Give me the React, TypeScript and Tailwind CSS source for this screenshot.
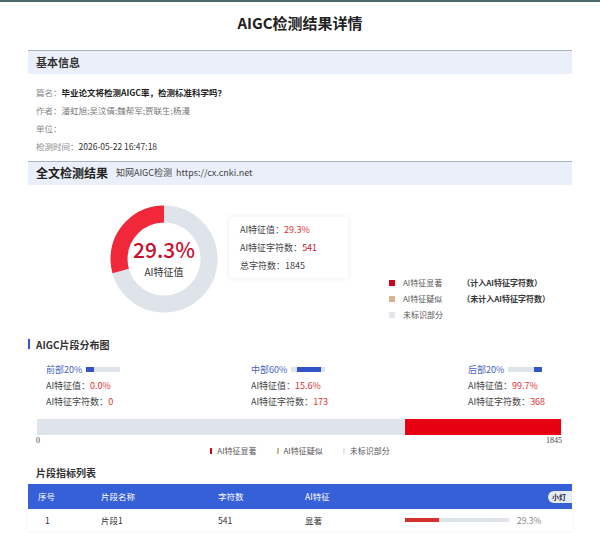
import React from 'react'

const font = { fontFamily: '"Noto Sans CJK SC", "Noto Sans", sans-serif' }

function Donut() {
  const r = 45
  const c = 2 * Math.PI * r
  const red = c * 0.293
  return (
    <div className="relative w-[108px] h-[108px]">
      <svg width="108" height="108" viewBox="0 0 108 108">
        <circle cx="54" cy="54" r={r} fill="none" stroke="#dfe3ea" strokeWidth="17" />
        <circle
          cx="54"
          cy="54"
          r={r}
          fill="none"
          stroke="#f0283a"
          strokeWidth="17"
          strokeDasharray={`${red} ${c}`}
          transform="rotate(-90 54 54) scale(1 -1) translate(0 -108)"
        />
      </svg>
      <div className="absolute inset-0 flex flex-col items-center justify-center">
        <div className="text-[21px] leading-none font-medium text-[#c8102e]">29.3%</div>
        <div className="text-[10px] text-[#333] mt-1">AI特征值</div>
      </div>
    </div>
  )
}

function Segment({ label, fill, offset, value, chars, w }: { label: string; fill: string; offset: string; value: string; chars: string; w: string }) {
  return (
    <div className={`text-[9px] leading-[16px] ${w}`}>
      <div className="flex items-center gap-1 text-[#4a5fc1]">
        {label}
        <div className="relative w-[34px] h-[5px] bg-[#dfe3ea]">
          <div className={`absolute top-0 h-full bg-[#3154c8] ${fill} ${offset}`} />
        </div>
      </div>
      <div className="text-[#444]">AI特征值：<span className="text-[#d33]">{value}</span></div>
      <div className="text-[#444]">AI特征字符数：<span className="text-[#d33]">{chars}</span></div>
    </div>
  )
}

export default function App() {
  return (
    <div className="w-[600px] h-[533px] bg-white overflow-hidden text-[#333] border-t-2 border-[#4a6b6a]" style={font}>
      <div className="pt-[10px] text-center text-[15px] font-bold text-[#222]">AIGC检测结果详情</div>
      <div className="mx-[28px] mt-[15px]">
        <div className="h-[24px] bg-[#eaeff9] border-t border-[#aab4cc] flex items-center px-[8px] text-[11px] font-bold">基本信息</div>
        <div className="pt-[9px] pl-[8px] text-[8.5px] leading-[18px] text-[#888]">
          <div>篇名：<span className="text-[#222] font-bold">毕业论文将检测AIGC率，检测标准科学吗？</span></div>
          <div>作者：<span className="text-[#777]">潘虹旭;吴汶倩;魏帮军;贾联生;杨漫</span></div>
          <div>单位：</div>
          <div>检测时间：<span className="text-[#333]">2026-05-22 16:47:18</span></div>
        </div>
        <div className="mt-[6px] h-[24px] bg-[#eaeff9] border-t border-[#aab4cc] flex items-center gap-2 px-[8px]">
          <span className="text-[12px] font-bold text-[#222]">全文检测结果</span>
          <span className="text-[9px] text-[#444]">知网AIGC检测&nbsp; https://cx.cnki.net</span>
        </div>
        <div className="flex mt-[20px] h-[132px]">
          <div className="ml-[82px]"><Donut /></div>
          <div className="ml-[11px] mt-[12px] w-[119px] h-[61px] shadow-[0_0_6px_rgba(0,0,0,0.08)] pl-[11px] pt-[4px] text-[9px] leading-[18px] text-[#444]">
            <div>AI特征值：<span className="text-[#d33]">29.3%</span></div>
            <div>AI特征字符数：<span className="text-[#c8102e]">541</span></div>
            <div>总字符数：1845</div>
          </div>
          <div className="ml-[41px] mt-[70px] text-[8px] leading-[16px] text-[#555]">
            <div className="flex items-center gap-2"><span className="w-[6px] h-[6px] bg-[#d0021b]" />AI特征显著<span className="ml-3 font-bold text-[#333]">（计入AI特征字符数）</span></div>
            <div className="flex items-center gap-2"><span className="w-[6px] h-[6px] bg-[#d4b58f]" />AI特征疑似<span className="ml-3 font-bold text-[#333]">（未计入AI特征字符数）</span></div>
            <div className="flex items-center gap-2"><span className="w-[6px] h-[6px] bg-[#e3e5ea]" />未标识部分</div>
          </div>
        </div>
        <div className="flex items-center gap-[6px] text-[10px] font-bold">
          <span className="w-[2px] h-[10px] bg-[#3154c8]" />AIGC片段分布图
        </div>
        <div className="flex pl-[18px] mt-[10px]">
          <Segment w="w-[205px]" label="前部20%" fill="w-[8px]" offset="left-0" value="0.0%" chars="0" />
          <Segment w="w-[217px]" label="中部60%" fill="w-[24px]" offset="left-[6px]" value="15.6%" chars="173" />
          <Segment w="w-[100px]" label="后部20%" fill="w-[8px]" offset="right-0" value="99.7%" chars="368" />
        </div>
        <div className="ml-[9px] mr-[11px] mt-[9px] h-[16px] bg-[#dfe3ea] flex justify-end">
          <div className="w-[156px] bg-[#e60012]" />
        </div>
        <div className="ml-[8px] mr-[10px] flex justify-between text-[8px] text-[#444]" style={{ fontFamily: '"Liberation Serif", serif' }}>
          <span>0</span><span>1845</span>
        </div>
        <div className="flex justify-center gap-[20px] text-[8px] text-[#555] -mt-[2px]">
          <span className="flex items-center gap-[5px]"><span className="w-[2px] h-[6px] bg-[#d0021b]" />AI特征显著</span>
          <span className="flex items-center gap-[5px]"><span className="w-[2px] h-[6px] bg-[#d4b58f]" />AI特征疑似</span>
          <span className="flex items-center gap-[5px]"><span className="w-[2px] h-[6px] bg-[#e3e5ea]" />未标识部分</span>
        </div>
        <div className="mt-[8px] ml-[8px] text-[10px] font-bold">片段指标列表</div>
        <div className="mt-[4px] h-[25px] bg-[#3560d8] text-white text-[8.5px] flex items-center relative">
          <span className="w-[73px] pl-[10px]">序号</span>
          <span className="w-[117px]">片段名称</span>
          <span className="w-[87px]">字符数</span>
          <span>AI特征</span>
          <span className="absolute right-0 top-[7px] h-[12px] w-[24px] rounded-l-full bg-[#e6ecf8] text-[#223] text-[7px] font-bold pl-[4px] leading-[12px]">小灯</span>
        </div>
        <div className="h-[23px] text-[8.5px] text-[#333] flex items-center shadow-[0_1px_3px_rgba(0,0,0,0.06)]">
          <span className="w-[73px] pl-[17px]">1</span>
          <span className="w-[117px]">片段1</span>
          <span className="w-[87px]">541</span>
          <span className="w-[100px]">显著</span>
          <div className="w-[104px] h-[4px] bg-[#dfe3ea]"><div className="w-[34px] h-full bg-[#d43030]" /></div>
          <span className="ml-[8px] text-[#888]">29.3%</span>
        </div>
      </div>
    </div>
  )
}
